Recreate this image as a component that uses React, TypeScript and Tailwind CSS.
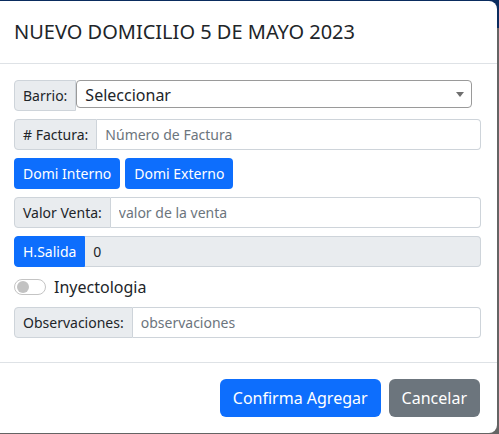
const label =
  "flex items-center px-2 text-sm text-[#212529] bg-[#e9ecef] border border-[#ced4da] rounded-l-[4px] whitespace-nowrap"
const input =
  "flex-1 min-w-0 h-full px-2 text-sm text-[#212529] border border-l-0 border-[#ced4da] rounded-r-[4px] outline-none placeholder:text-[#6c757d]"

function Field({ name, placeholder }: { name: string; placeholder: string }) {
  return (
    <div className="flex h-[31px] mb-2">
      <span className={label}>{name}</span>
      <input className={input + " bg-white"} placeholder={placeholder} />
    </div>
  )
}

export default function App() {
  return (
    <div
      className="w-[499px] h-[434px] overflow-hidden pt-px bg-[linear-gradient(to_bottom,#0a2c5e_28px,#646464_28px)]"
      style={{ fontFamily: '"Noto Sans", "Open Sans", sans-serif' }}
    >
      <div className="w-[497px] h-[432px] bg-white rounded-r-lg flex flex-col">
        {/* header */}
        <div className="h-[63px] flex items-center pl-[14px] pr-4 border-b border-[#dee2e6]">
          <h5 className="text-xl leading-[30px] text-[#212529]">NUEVO DOMICILIO 5 DE MAYO 2023</h5>
        </div>

        {/* body */}
        <div className="pl-[14px] pr-4 pt-4 pb-4 border-b border-[#dee2e6]">
          <div className="flex h-[31px] mb-2 pr-[9px]">
            <span className={label}>Barrio:</span>
            <div className="relative flex-1 h-[28px]">
              <select className="w-full h-full appearance-none pl-2 pt-[2px] text-base text-[#212529] bg-white border border-[#9a9a9a] rounded-[4px] outline-none">
                <option>Seleccionar</option>
              </select>
              <span className="absolute right-[8px] top-[12px] w-0 h-0 border-x-[4px] border-x-transparent border-t-[5px] border-t-[#6f6f6f]" />
            </div>
          </div>

          <Field name="# Factura:" placeholder="Número de Factura" />

          <div className="flex gap-[5px] mb-2">
            <button className="h-[31px] px-[9px] text-sm text-white bg-[#0d6efd] rounded-[4px]">Domi Interno</button>
            <button className="h-[31px] px-[9px] text-sm text-white bg-[#0d6efd] rounded-[4px]">Domi Externo</button>
          </div>

          <Field name="Valor Venta:" placeholder="valor de la venta" />

          <div className="flex h-[31px] mb-2">
            <span className="flex items-center px-2 text-sm text-white bg-[#0d6efd] border border-[#0d6efd] rounded-l-[4px]">
              H.Salida
            </span>
            <input className={input + " bg-[#e9ecef]"} defaultValue="0" disabled />
          </div>

          <div className="flex items-center h-6 mb-2">
            <span className="relative w-8 h-4 rounded-full border border-[#c4c4c4] bg-white">
              <span className="absolute left-[2px] top-[1px] w-3 h-3 rounded-full bg-[#c2c2c2]" />
            </span>
            <span className="ml-2 text-base text-[#212529]">Inyectologia</span>
          </div>

          <Field name="Observaciones:" placeholder="observaciones" />
        </div>

        {/* footer */}
        <div className="flex justify-end gap-2 pt-4 pr-[17px]">
          <button className="h-[38px] px-[13px] text-base text-white bg-[#0d6efd] rounded-md">Confirma Agregar</button>
          <button className="h-[38px] px-[13px] text-base text-white bg-[#6c757d] rounded-md">Cancelar</button>
        </div>
      </div>
    </div>
  )
}
